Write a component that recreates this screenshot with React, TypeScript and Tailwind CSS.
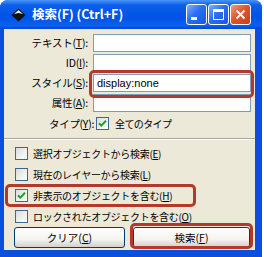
import React from 'react';

const jp = { fontFamily: '"Noto Sans CJK JP", "Liberation Sans", sans-serif' };

const U = ({ c }: { c: string }) => <span className="underline underline-offset-[1px]">{c}</span>;

const Box = ({ checked }: { checked?: boolean }) => (
  <span className="flex h-[13px] w-[13px] shrink-0 items-center justify-center border border-[#3a6a94] bg-[linear-gradient(135deg,#dcdcd7,#ffffff)]">
    {checked && (
      <svg width="9" height="9" viewBox="0 0 9 9">
        <path d="M1 4.2 L3.3 6.6 L8 1.8" fill="none" stroke="#21a121" strokeWidth="2" />
      </svg>
    )}
  </span>
);

const TitleBtn = ({ kind }: { kind: 'min' | 'max' | 'close' }) => (
  <div
    className={
      'flex h-[21px] w-[21px] items-center justify-center rounded-[3px] border border-white ' +
      (kind === 'close'
        ? 'bg-[linear-gradient(135deg,#f0a080,#e0552a_45%,#c8401c)]'
        : 'bg-[linear-gradient(135deg,#7fb0ff,#2a6ef5_45%,#1a55e0)]')
    }
  >
    {kind === 'min' && <div className="mt-[8px] mr-[5px] h-[3px] w-[6px] bg-white" />}
    {kind === 'max' && <div className="h-[11px] w-[11px] border border-t-[3px] border-white" />}
    {kind === 'close' && (
      <svg width="11" height="11" viewBox="0 0 11 11">
        <path d="M1.5 1.5 L9.5 9.5 M9.5 1.5 L1.5 9.5" stroke="white" strokeWidth="2" />
      </svg>
    )}
  </div>
);

const Field = ({ value }: { value?: string }) => (
  <div
    className="flex h-[18px] flex-1 items-center border border-[#7f9db9] border-b-[#8a9aa8] bg-white px-[3px] text-[11px] text-black"
    style={{ fontFamily: '"Liberation Sans", sans-serif' }}
  >
    {value}
  </div>
);

const App: React.FC = () => {
  const rows: [string, string, string?][] = [
    ['テキスト(', 'T', ''],
    ['ID(', 'I', ''],
    ['スタイル(', 'S', 'display:none'],
    ['属性(', 'A', ''],
  ];

  const checks: [string, string, boolean][] = [
    ['選択オブジェクトから検索(', 'E', false],
    ['現在のレイヤーから検索(', 'L', false],
    ['非表示のオブジェクトを含む(', 'H', true],
    ['ロックされたオブジェクトを含む(', 'O', false],
  ];

  return (
    <div className="h-[257px] w-[264px] bg-white" style={jp}>
      <div className="flex h-[257px] w-[262px] flex-col rounded-t-[8px] bg-[#0a4fe0]">
        {/* Title bar */}
        <div className="flex h-[29px] shrink-0 items-center rounded-t-[8px] bg-[linear-gradient(180deg,#4a95fa_0%,#0a5ee8_18%,#0053e6_60%,#0a60ef_88%,#0046d6_100%)] pl-[11px] pr-[11px]">
          <svg width="15" height="14" viewBox="0 0 15 14">
            <path d="M7.5 0.5 L14.5 7 L7.5 13.5 L0.5 7 Z" fill="#111" />
            <path d="M7.5 2 L12 6 L7.5 5 L3 6 Z" fill="#e8e8e8" />
          </svg>
          <span className="ml-[6px] text-[12.5px] font-bold text-white">検索(F) (Ctrl+F)</span>
          <div className="ml-auto flex gap-[1px]">
            <TitleBtn kind="min" />
            <TitleBtn kind="max" />
            <TitleBtn kind="close" />
          </div>
        </div>

        {/* Body */}
        <div className="relative ml-[4px] mr-[7px] mb-[7px] flex flex-1 flex-col bg-[#ece9d8] text-[10.5px] text-black">
          <div className="flex flex-col gap-[2px] pt-[5px] pr-[4px]">
            {rows.map(([l, k, v]) => (
              <div key={k} className="flex h-[18px] items-center">
                <span className="w-[84px] text-right tracking-[-0.2px]">
                  {l}
                  <U c={k} />
                  ):
                </span>
                <div className="ml-[5px] flex flex-1">
                  <Field value={v} />
                </div>
              </div>
            ))}
          </div>

          <div className="mt-[5px] flex h-[13px] items-center pl-[45px] tracking-[-0.3px]">
            <span>
              タイプ(<U c="Y" />):
            </span>
            <span className="ml-[2px]">
              <Box checked />
            </span>
            <span className="ml-[6px] text-[10px] tracking-[-0.6px]">全てのタイプ</span>
          </div>

          <div className="mt-[8px] border-t border-b border-t-[#aca899] border-b-white" />

          <div className="mt-[3px] flex flex-col text-[10px] tracking-[-0.3px]">
            {checks.map(([l, k, c]) => (
              <div key={k} className="flex h-[21px] items-center pl-[11px]">
                <Box checked={c} />
                <span className="ml-[5px]">
                  {l}
                  <U c={k} />)
                </span>
              </div>
            ))}
          </div>

          <div className="flex gap-[8px] pl-[10px] text-[10.5px]">
            <button className="h-[21px] w-[111px] rounded-[3px] border border-[#003c74] bg-[linear-gradient(180deg,#ffffff,#f4f3ee_60%,#d6d0c5)]">
              クリア(<U c="C" />)
            </button>
            <button className="h-[21px] w-[117px] rounded-[3px] border border-[#003c74] bg-[linear-gradient(180deg,#ffffff,#f4f3ee_60%,#d6d0c5)]">
              検索(<U c="F" />)
            </button>
          </div>

          {/* red annotation boxes */}
          <div className="absolute left-[85px] top-[41px] h-[28px] w-[165px] rounded-[5px] border-[3px] border-[#b5392b]" />
          <div className="absolute left-[1px] top-[155px] h-[23px] w-[191px] rounded-[5px] border-[3px] border-[#b5392b]" />
          <div className="absolute left-[126px] top-[194px] h-[26px] w-[123px] rounded-[5px] border-[3px] border-[#b5392b]" />
        </div>
      </div>
    </div>
  );
};

export default App;
